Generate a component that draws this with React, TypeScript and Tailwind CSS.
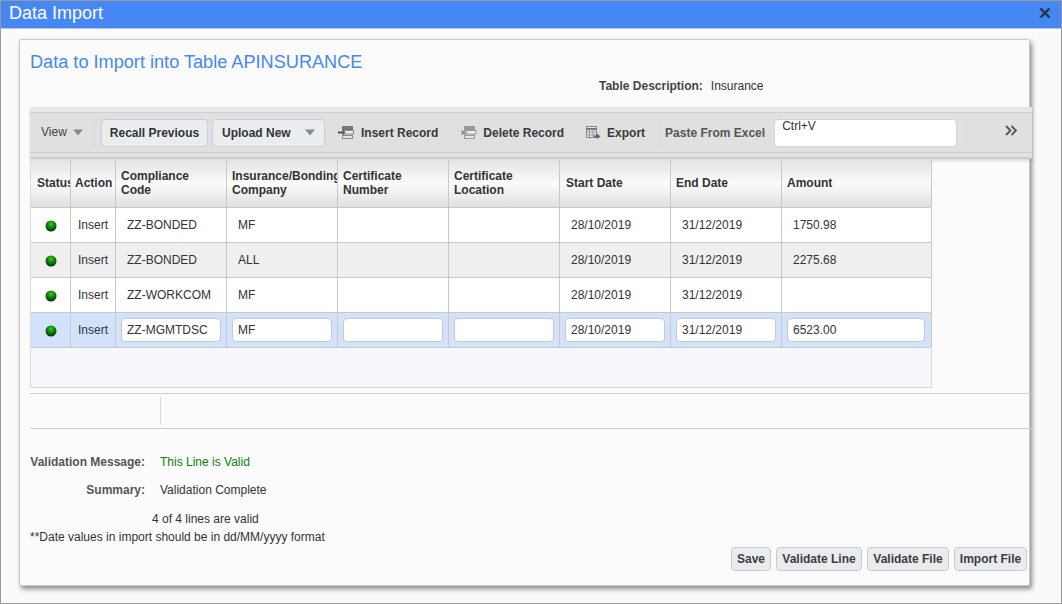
import React from "react";

const Ball = () => (
  <svg width="12" height="12" viewBox="0 0 12 12">
    <defs>
      <radialGradient id="ball" cx="50%" cy="32%" r="68%">
        <stop offset="0%" stopColor="#36d01f" />
        <stop offset="45%" stopColor="#0f870c" />
        <stop offset="100%" stopColor="#052e08" />
      </radialGradient>
    </defs>
    <circle cx="6" cy="6" r="5.5" fill="url(#ball)" />
  </svg>
);

const Caret = () => (
  <svg width="10" height="7" viewBox="0 0 10 7"><path d="M0 0.5h10L5 6.5z" fill="#8a8a8a" /></svg>
);

const InsertIcon = () => (
  <svg width="17" height="13" viewBox="0 0 17 13" fill="none">
    <rect x="4.5" y="0.5" width="10" height="3" fill="#777" stroke="#777" />
    <rect x="5.5" y="4.5" width="10" height="3.5" fill="#eee" stroke="#888" />
    <rect x="4.5" y="9.5" width="10" height="3" fill="#e4e4e4" stroke="#888" />
    <path d="M0 6.5h5" stroke="#555" strokeWidth="2" />
    <path d="M4.5 3.5l3 3-3 3z" fill="#555" />
  </svg>
);

const DeleteIcon = () => (
  <svg width="16" height="13" viewBox="0 0 16 13" fill="none">
    <rect x="3.5" y="0.5" width="10" height="3" fill="#999" stroke="#999" />
    <rect x="5.5" y="4.5" width="9.5" height="3.5" fill="#eee" stroke="#999" />
    <rect x="3.5" y="9.5" width="10" height="3" fill="#e4e4e4" stroke="#999" />
    <path d="M0.5 4.500l4 4M4.500 4.500l-4 4" stroke="#777" strokeWidth="1.2" />
  </svg>
);

const ExportIcon = () => (
  <svg width="15" height="13" viewBox="0 0 15 13" fill="none">
    <rect x="0.5" y="0.5" width="10" height="11" fill="#e8e8e8" stroke="#888" />
    <path d="M0.5 3h10" stroke="#777" strokeWidth="2" />
    <path d="M0.5 6h10M0.5 9h10M3.500 3v8M7 3v8" stroke="#999" />
    <path d="M8 9.500h3V7.500l3.500 3-3.500 2.500v-1.500H8z" fill="#666" />
  </svg>
);

const Sep = () => <div className="w-px h-[28px] bg-[#d6dce4]" />;

const ToolBtn = ({ icon, label, cls }: { icon: React.ReactNode; label: string; cls: string }) => (
  <div className={`flex items-center gap-[6px] font-bold text-[#3a3a3a] ${cls}`}>
    {icon}
    <span>{label}</span>
  </div>
);

const widths = "grid grid-cols-[40px_45px_111px_111px_111px_111px_111px_111px_150px]";

const headers: [string, string][] = [
  ["Status", "pl-[6px]"],
  ["Action", "pl-[4px]"],
  ["Compliance\nCode", "pl-[5px]"],
  ["Insurance/Bonding\nCompany", "pl-[5px]"],
  ["Certificate\nNumber", "pl-[5px]"],
  ["Certificate\nLocation", "pl-[5px]"],
  ["Start Date", "pl-[6px]"],
  ["End Date", "pl-[5px]"],
  ["Amount", "pl-[5px]"],
];

const rows = [
  { code: "ZZ-BONDED", co: "MF", amt: "1750.98", bg: "bg-white" },
  { code: "ZZ-BONDED", co: "ALL", amt: "2275.68", bg: "bg-[#efefef]" },
  { code: "ZZ-WORKCOM", co: "MF", amt: "", bg: "bg-white" },
];

const Cell = ({ children, cls = "" }: { children?: React.ReactNode; cls?: string }) => (
  <div className={`flex items-center border-r border-[#c8c8c8] h-full overflow-hidden whitespace-nowrap ${cls}`}>{children}</div>
);

const Input = ({ v, w = "w-[100px]" }: { v: string; w?: string }) => (
  <div className={`${w} h-[24px] bg-white border border-[#c9c9c9] rounded-[4px] flex items-center pl-[5px] text-[#333]`}>{v}</div>
);

const FootBtn = ({ label, w }: { label: string; w: string }) => (
  <div className={`${w} h-[24px] rounded-[4px] border border-[#c9cdd1] bg-[#e9ecef] flex items-center justify-center font-bold text-[#3d3d3d]`}>{label}</div>
);

export default function App() {
  return (
    <div
      className="w-[1062px] h-[604px] overflow-hidden bg-[#fafafa] border border-[#989898] text-[12px] text-[#333] flex flex-col"
      style={{ fontFamily: '"Liberation Sans", Arial, sans-serif' }}
    >
      <div className="h-[27px] shrink-0 bg-[#4487f5] border-b border-[#b9c4d4] flex items-center justify-between pl-[8px] pr-[10px] box-content">
        <span className="text-[18px] text-white leading-[24px] -mt-[3px]">Data Import</span>
        <svg className="-mt-[3px]" width="12" height="12" viewBox="0 0 12 12"><path d="M1.500 1.500l9 9M10.500 1.500l-9 9" stroke="#2b3038" strokeWidth="2.4" /></svg>
      </div>

      <div className="ml-[18px] mt-[10px] w-[1011px] h-[547px] shrink-0 bg-[#fbfbfb] border border-[#c8c8c8] rounded-[2px] shadow-[2px_3px_5px_rgba(0,0,0,0.45)] pl-[10px] flex flex-col">
        <h1 className="text-[18.15px] leading-[22px] text-[#4689f0] mt-[11px]">Data to Import into Table APINSURANCE</h1>
        <div className="flex mt-[5px] h-[16px] items-center pl-[569px]">
          <span className="font-bold text-[#444]">Table Description:</span>
          <span className="ml-[8px]">Insurance</span>
        </div>

        {/* toolbar */}
        <div className="w-[1002px] mt-[13px] shrink-0 bg-[#e2e2e2] h-[52px] border-t-[5px] border-b-2 border-t-[#e6e6e6] border-b-[#cccccc] flex flex-col shadow-[0_2px_3px_rgba(0,0,0,0.12)]">
          <div className="h-[41px] bg-[#e0e0e0] border-y border-[#cfcfcf] flex items-center">
            <div className="flex items-center w-[65px] pl-[11px] gap-[6px] text-[#444] -mt-[1px]">
              <span>View</span>
              <Caret />
            </div>
            <Sep />
            <div className="ml-[5px] w-[107px] h-[28px] rounded-[4px] border border-[#c3d0dc] bg-[#eaedf0] flex items-center justify-center font-bold text-[#333]">Recall Previous</div>
            <div className="ml-[4px] w-[113px] h-[28px] rounded-[4px] border border-[#c3d0dc] bg-[#eaedf0] flex items-center justify-between pl-[9px] pr-[9px] font-bold text-[#333]">
              <span>Upload New</span>
              <Caret />
            </div>
            <ToolBtn icon={<InsertIcon />} label="Insert Record" cls="ml-[13px]" />
            <ToolBtn icon={<DeleteIcon />} label="Delete Record" cls="ml-[23px]" />
            <ToolBtn icon={<ExportIcon />} label="Export" cls="ml-[22px]" />
            <div className="ml-[14px]"><Sep /></div>
            <span className="ml-[5px] font-bold text-[#555]">Paste From Excel</span>
            <div className="ml-[9px] w-[183px] h-[28px] rounded-[4px] bg-white border border-[#d4d4d4] pl-[7px] leading-[13px] text-[#333]">Ctrl+V</div>
            <div className="ml-[8px]"><Sep /></div>
            <svg className="ml-[39px] -mt-[4px]" width="12" height="11" viewBox="0 0 12 11" fill="none"><path d="M1 1l4.500 4.500L1 10M6.500 1L11 5.500 6.500 10" stroke="#555" strokeWidth="1.800" /></svg>
          </div>
        </div>

        {/* table */}
        <div className="w-[902px] h-[228px] mt-[1px] shrink-0 border-x border-b border-[#d5dbe3] bg-[#f7f8fc] flex flex-col">
          <div className={`${widths} h-[48px] bg-gradient-to-b from-[#e3e3e3] via-[#fbfbfb] to-[#e0e0e0] border-b border-[#c8c8c8] font-bold text-[#333] leading-[14px]`}>
            {headers.map(([h, p]) => (
              <Cell key={h} cls={`${p} pb-[2px]`}><span className="whitespace-pre-line">{h}</span></Cell>
            ))}
          </div>
          {rows.map((r, i) => (
            <div key={i} className={`${widths} h-[35px] ${r.bg} border-b border-[#c8c8c8]`}>
              <Cell cls="justify-center pl-[1px] pt-[2px]"><Ball /></Cell>
              <Cell cls="pl-[7px]">Insert</Cell>
              <Cell cls="pl-[11px]">{r.code}</Cell>
              <Cell cls="pl-[11px]">{r.co}</Cell>
              <Cell />
              <Cell />
              <Cell cls="pl-[11px]">28/10/2019</Cell>
              <Cell cls="pl-[11px]">31/12/2019</Cell>
              <Cell cls="pl-[11px]">{r.amt}</Cell>
            </div>
          ))}
          <div className={`${widths} h-[35px] bg-[#d2e2fa] border-b border-[#c8c8c8]`}>
            <Cell cls="justify-center pl-[1px] pt-[2px]"><Ball /></Cell>
            <Cell cls="pl-[7px]">Insert</Cell>
            <Cell cls="pl-[5px]"><Input v="ZZ-MGMTDSC" /></Cell>
            <Cell cls="pl-[5px]"><Input v="MF" /></Cell>
            <Cell cls="pl-[5px]"><Input v="" /></Cell>
            <Cell cls="pl-[5px]"><Input v="" /></Cell>
            <Cell cls="pl-[5px]"><Input v="28/10/2019" /></Cell>
            <Cell cls="pl-[5px]"><Input v="31/12/2019" /></Cell>
            <Cell cls="pl-[5px]"><Input v="6523.00" w="w-[138px]" /></Cell>
          </div>
        </div>

        {/* pager */}
        <div className="w-[1002px] h-[36px] mt-[5px] shrink-0 border-y border-[#cfcfcf] flex items-center pl-[130px]">
          <div className="w-px h-[28px] bg-[#d3dae3]" />
        </div>

        {/* footer */}
        <div className="grid grid-cols-[115px_1fr] gap-x-[15px] mt-[24px] text-[#333]">
          <span className="font-bold text-[#555] text-right h-[28px]">Validation Message:</span>
          <span className="text-[#0a7f0a]">This Line is Valid</span>
          <span className="font-bold text-[#555] text-right h-[28px]">Summary:</span>
          <span>Validation Complete</span>
        </div>
        <div className="pl-[122px] mt-[3px] leading-[14px]">4 of 4 lines are valid</div>
        <div className="mt-[4px] leading-[14px]">**Date values in import should be in dd/MM/yyyy format</div>
        <div className="flex justify-end gap-[5px] w-[997px] mt-[3px]">
          <FootBtn label="Save" w="w-[40px]" />
          <FootBtn label="Validate Line" w="w-[86px]" />
          <FootBtn label="Validate File" w="w-[82px]" />
          <FootBtn label="Import File" w="w-[73px]" />
        </div>
      </div>
    </div>
  );
}
